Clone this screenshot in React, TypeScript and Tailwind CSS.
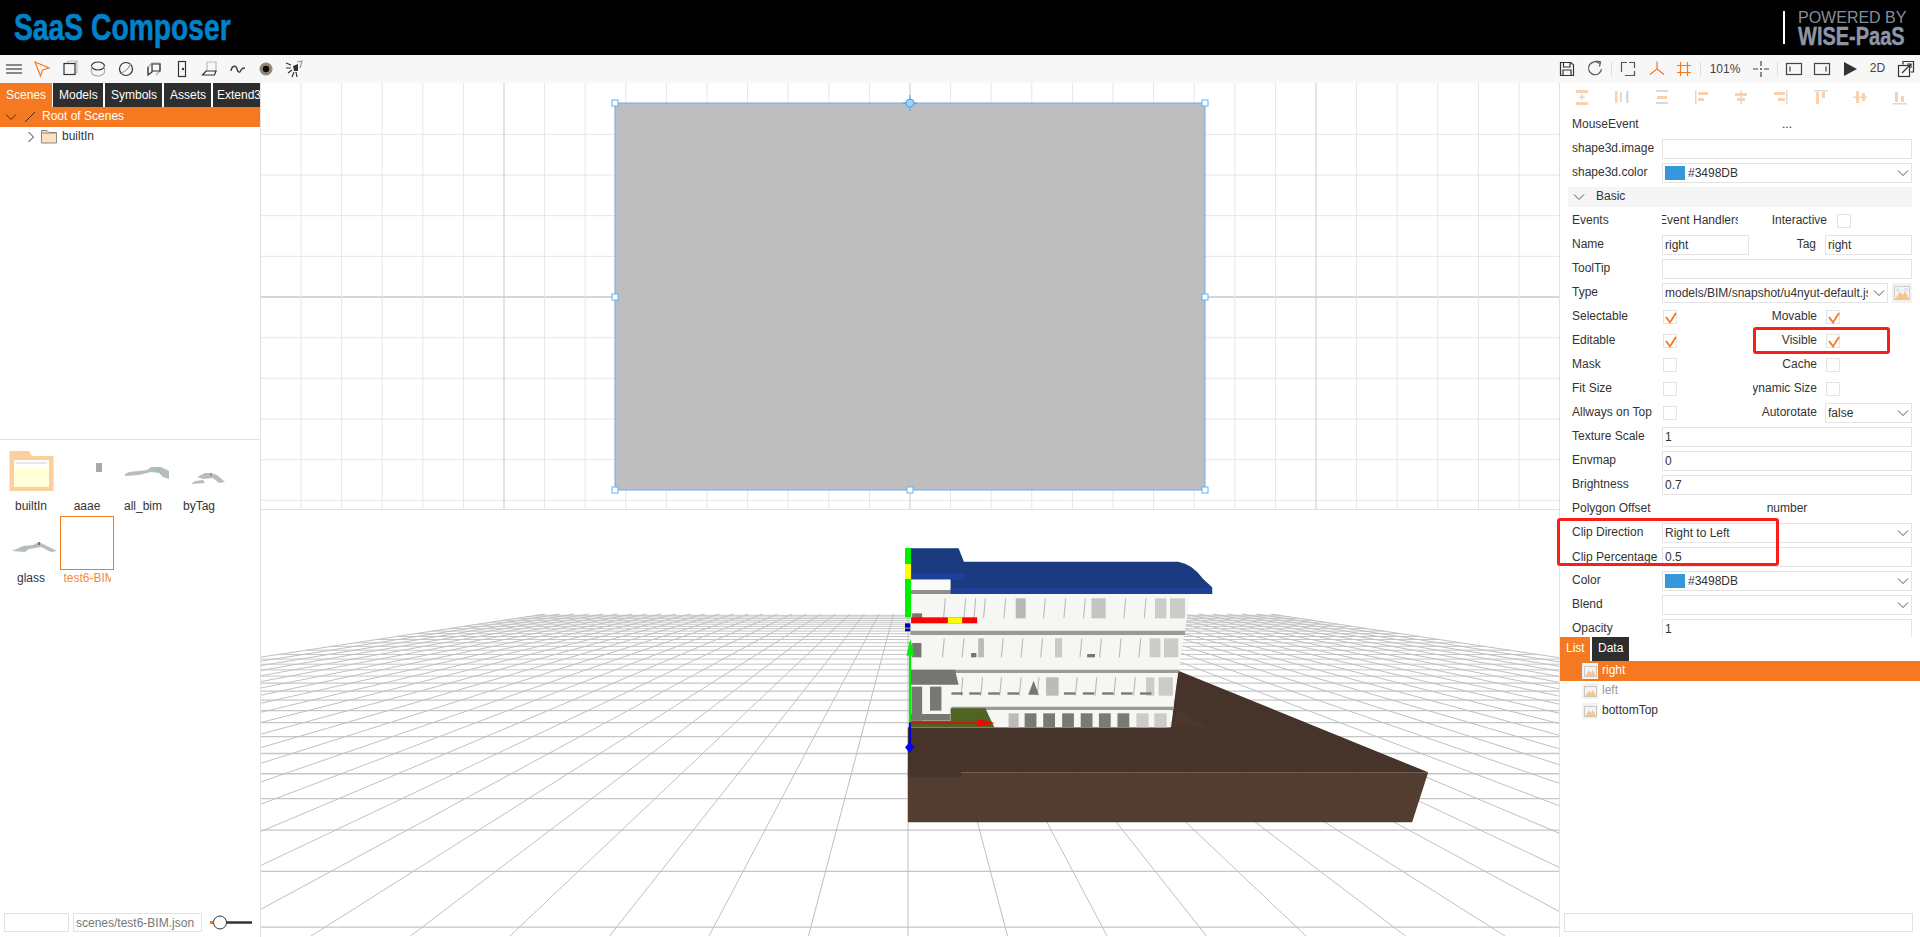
import type { ReactNode } from "react";

const ORANGE = "#f47920";
const LIGHT = "#fbd0ad";
const GREY = "#d9d9d9";

const Chevron = ({ dir = "down", color = "#555" }: { dir?: "down" | "right"; color?: string }) => (
  <svg width="12" height="12" viewBox="0 0 12 12" fill="none" stroke={color} strokeWidth="1">
    {dir === "down" ? <path d="M1 3.5 L6 8.5 L11 3.5" /> : <path d="M3.5 1 L8.5 6 L3.5 11" />}
  </svg>
);

const ImageIcon = () => (
  <svg width="16" height="14" viewBox="0 0 16 14">
    <rect x="0.5" y="0.5" width="15" height="13" fill="#f4f4f4" stroke="#cfcfcf" />
    <path d="M1 13 L6 6 L9 9 L11 5 L15 13 Z" fill="#f6c48e" />
    <rect x="2.5" y="2.5" width="3" height="3" fill="#d5dfe6" />
    <rect x="10" y="2" width="4" height="3" fill="#dfe6ea" />
  </svg>
);

const Tool = ({ w, children }: { w: string; children: ReactNode }) => (
  <div className={`${w} h-7 flex items-center justify-center shrink-0`}>{children}</div>
);

const Ic = ({ children }: { children: ReactNode }) => (
  <svg width="20" height="20" viewBox="0 0 20 20" fill="none" stroke="#333" strokeWidth="1.2">
    {children}
  </svg>
);

const leftIcons: ReactNode[] = [
  <path key="a" d="M2 6h16M2 10h16M2 14h16" stroke="#666" strokeWidth="1.5" />,
  <path key="b" d="M3 3 L17 9 L10.5 11 L8.5 17 Z" stroke={ORANGE} />,
  <g key="c">
    <path d="M7 3.5 L9 2 H17 V13 L15 15" stroke="#bbb" />
    <path d="M15 4 L17 2" stroke="#bbb" />
    <rect x="4" y="4.5" width="11" height="11" />
  </g>,
  <g key="d">
    <ellipse cx="10" cy="7" rx="6.5" ry="4" />
    <path d="M3.5 7 V13 C3.5 15 6.5 17 10 17 C13.5 17 16.5 15 16.5 13 V7" stroke="#aaa" />
  </g>,
  <g key="e">
    <circle cx="10" cy="10" r="6.5" />
    <path d="M5 14 C9 13 13 9 14.5 5" stroke="#999" />
  </g>,
  <g key="f">
    <path d="M4 15 V8 L8 4 H16 V12 L12 16" stroke="#aaa" />
    <path d="M4 8 V16 L8 13 V5 H16 V12 H8" />
  </g>,
  <g key="g">
    <rect x="6.5" y="2.5" width="7" height="15" />
    <circle cx="11" cy="10" r="0.6" fill="#333" />
  </g>,
  <g key="h">
    <path d="M7 12 V3 H16 V13" stroke="#bbb" />
    <path d="M2.5 16 L6 12 H16 L14.5 16 Z" />
  </g>,
  <path key="i" d="M3 12 C4 6 8 6 9 10 C10 14 12 14 13 11 C14 9 15 9 17 9" stroke="#444" strokeWidth="1.5" />,
  <g key="j">
    <circle cx="10" cy="10" r="6.5" fill="#8a8a78" stroke="none" />
    <circle cx="10" cy="10" r="3.2" fill="#1c0606" stroke="none" />
  </g>,
  <g key="k">
    <path d="M13 3 L18 2 L16 9" stroke="#999" />
    <path d="M9 7 L14 5 L14 12 L10 12 Z" fill="#333" stroke="none" />
    <path d="M2 4 L7 6 M2 9 H7 M4 14 L8 11 M8 18 L10 13 M13 18 L12 13" />
  </g>,
];

const Toolbar = () => (
  <div className="h-7 bg-[#f7f7f7] flex items-center justify-between shrink-0">
    <div className="flex">
      {leftIcons.map((icon, i) => (
        <Tool key={i} w="w-7">
          <Ic>{icon}</Ic>
        </Tool>
      ))}
    </div>
    <div className="flex items-center">
      <Tool w="w-7">
        <Ic>
          <path d="M3.5 3.5 H14 L16.5 6 V16.5 H3.5 Z" />
          <path d="M6.5 3.5 V8 H13 V3.5 M6 16.5 V11 H14 V16.5" />
        </Ic>
      </Tool>
      <Tool w="w-7">
        <Ic>
          <path d="M14.5 4.5 A6.5 6.5 0 1 0 16.5 10" stroke="#555" />
          <path d="M11 2 L15.5 3 L14.5 7.5" stroke="#555" />
        </Ic>
      </Tool>
      <Tool w="w-[4px]">
        <div className="w-px h-[14px] bg-[#ddd]" />
      </Tool>
      <Tool w="w-[30px]">
        <Ic>
          <path d="M9 3.5 H3.5 V13 M11 3.5 H16.5 V9 M16.5 12 V16.5 H7 " stroke="#555" />
        </Ic>
      </Tool>
      <Tool w="w-[27px]">
        <Ic>
          <path d="M10 2.5 V10 L3 15.5 M10 10 L17 15.5" stroke={ORANGE} />
        </Ic>
      </Tool>
      <Tool w="w-7">
        <Ic>
          <path d="M6.5 3 V17 M13.5 3 V17 M3 6.5 H17 M3 13.5 H17" stroke={ORANGE} />
        </Ic>
      </Tool>
      <Tool w="w-[4px]">
        <div className="w-px h-[14px] bg-[#ddd]" />
      </Tool>
      <Tool w="w-[46px]">
        <span className="text-[12px] text-[#444]">101%</span>
      </Tool>
      <Tool w="w-[26px]">
        <Ic>
          <path d="M10 2 V7 M10 13 V18 M2 10 H7 M13 10 H18" stroke="#444" />
          <circle cx="10" cy="10" r="1" fill="#444" stroke="none" />
        </Ic>
      </Tool>
      <Tool w="w-[6px]">
        <div className="w-px h-[14px] bg-[#ddd]" />
      </Tool>
      <Tool w="w-7">
        <Ic>
          <rect x="2.5" y="4.5" width="15" height="11" stroke="#444" />
          <path d="M6 7.5 V12.5" stroke="#444" />
        </Ic>
      </Tool>
      <Tool w="w-[27px]">
        <Ic>
          <rect x="2.5" y="4.5" width="15" height="11" stroke="#444" />
          <path d="M14 7.5 V12.5" stroke="#444" />
        </Ic>
      </Tool>
      <Tool w="w-[29px]">
        <Ic>
          <path d="M4 3 L17 10 L4 17 Z" fill="#333" stroke="none" />
        </Ic>
      </Tool>
      <Tool w="w-[27px]">
        <span className="text-[12px] text-[#444] pb-[2px]">2D</span>
      </Tool>
      <Tool w="w-[29px]">
        <Ic>
          <path d="M7 5.5 V2.5 H17.5 V13 H14.5" />
          <rect x="2.5" y="6.5" width="11" height="11" />
          <path d="M6 14 L15 5 M11 5 H15 V9" />
        </Ic>
      </Tool>
    </div>
  </div>
);

const Silhouette = ({ shape }: { shape: string }) => {
  if (shape === "aaae") {
    return (
      <svg width="53" height="54" viewBox="0 0 53 54" className="mx-auto">
        <rect x="35" y="19" width="6" height="9" fill="#a8a8a8" />
        <rect x="36" y="19" width="3" height="2" fill="#c9b26a" />
      </svg>
    );
  }
  if (shape === "all_bim") {
    return (
      <svg width="53" height="54" viewBox="0 0 53 54" className="mx-auto">
        <path d="M8 30 L12 28 L22 27 L30 26 L34 23 L44 23 L52 27 L52 35 L46 33 L42 29 L34 28 L22 31 L8 32 Z" fill="#b6bdbd" />
        <rect x="38" y="24" width="5" height="4" fill="#9fc0bb" />
      </svg>
    );
  }
  if (shape === "byTag") {
    return (
      <svg width="53" height="54" viewBox="0 0 53 54" className="mx-auto">
        <path d="M24 33 L32 29 L38 29 L44 31 L52 38 L46 39 L40 34 L30 35 Z M18 40 L22 37 L30 36 L32 39 Z" fill="#b6bdbd" />
        <rect x="37" y="29" width="2" height="3" fill="#d28a3a" />
      </svg>
    );
  }
  return (
    <svg width="53" height="54" viewBox="0 0 53 54" className="mx-auto">
      <path d="M7 35 L18 30 L28 29 L34 26 L42 30 L52 35 L46 36 L36 31 L24 33 L20 36 Z" fill="#b6bdbd" />
      <rect x="33" y="26" width="2" height="3" fill="#a0702c" />
    </svg>
  );
};

const FolderThumb = () => (
  <svg width="53" height="54" viewBox="0 0 53 54" className="mx-auto">
    <path d="M4.500 7 H24 L27 12 H48.500 V47 H4.500 Z" fill="#fdcf9e" />
    <rect x="9" y="16" width="35" height="27" fill="#ffffd8" />
    <rect x="9" y="16" width="35" height="8" fill="#ffffff" />
    <rect x="11" y="18" width="31" height="2" fill="#e8e8e8" />
  </svg>
);

const LeftPanel = () => (
  <aside className="w-[261px] shrink-0 border-r border-[#e2e2e2] flex flex-col">
    <div className="h-6 flex text-white text-[12px] leading-6 shrink-0 overflow-hidden">
      <div className="w-[52px] bg-[#f47920] pl-[6px] shrink-0">Scenes</div>
      <div className="w-[50px] ml-px bg-[#2e2e2e] pl-[6px] shrink-0">Models</div>
      <div className="w-[57px] ml-[2px] bg-[#2e2e2e] pl-[6px] shrink-0">Symbols</div>
      <div className="w-[47px] ml-[2px] bg-[#2e2e2e] pl-[6px] shrink-0">Assets</div>
      <div className="w-[47px] ml-[2px] bg-[#2e2e2e] pl-[4px] shrink-0 overflow-hidden whitespace-nowrap">Extend3D</div>
    </div>
    <div className="h-5 bg-[#f47920] text-white text-[12px] flex items-center pl-[5px] shrink-0">
      <Chevron color="#4a2a10" />
      <svg width="12" height="12" viewBox="0 0 12 12" className="ml-[7px]">
        <path d="M1 11 L11 1" stroke="#4a2a10" strokeWidth="1" />
      </svg>
      <span className="ml-[6px] pb-[2px]">Root of Scenes</span>
    </div>
    <div className="h-[312px] shrink-0">
      <div className="h-[19px] flex items-center pl-[25px] text-[12px] text-[#333]">
        <Chevron dir="right" color="#333" />
        <svg width="16" height="15" viewBox="0 0 16 15" className="ml-[4px]">
          <path d="M0.500 1.500 H6 L8 3.500 H15.500 V14 H0.500 Z" fill="#fde0c0" stroke="#888" />
          <path d="M0.500 4 H15.500" stroke="#888" />
        </svg>
        <span className="ml-[5px] pb-[2px]">builtIn</span>
      </div>
    </div>
    <div className="flex-1 border-t border-[#e2e2e2] pt-1 pl-[3px]">
      <div className="grid grid-cols-[repeat(4,56px)] text-[12px] text-[#333] text-center">
        {[
          { name: "builtIn", kind: "folder" },
          { name: "aaae", kind: "aaae" },
          { name: "all_bim", kind: "all_bim" },
          { name: "byTag", kind: "byTag" },
          { name: "glass", kind: "glass" },
          { name: "test6-BIM", kind: "selected" },
        ].map((item) => (
          <div key={item.name} className="h-[72px]">
            {item.kind === "selected" ? (
              <div className="w-[54px] h-[54px] mx-auto border border-[#f47920]" />
            ) : item.kind === "folder" ? (
              <FolderThumb />
            ) : (
              <Silhouette shape={item.kind} />
            )}
            <div
              className={`w-[47px] mx-auto overflow-hidden whitespace-nowrap leading-4 ${
                item.kind === "selected" ? "text-[#f58a3c]" : ""
              }`}
            >
              {item.name}
            </div>
          </div>
        ))}
      </div>
    </div>
    <div className="h-[24px] pb-[5px] flex items-stretch pl-1 shrink-0">
      <input readOnly className="w-[65px] border border-[#e2e2e2]" />
      <input
        readOnly
        value="scenes/test6-BIM.json"
        className="w-[129px] ml-[4px] border border-[#e2e2e2] text-[12px] text-[#777] pl-[2px]"
      />
      <svg width="44" height="19" viewBox="0 0 44 19" className="ml-[8px]">
        <rect x="0" y="8" width="3" height="3" fill={ORANGE} />
        <path d="M10 9.500 H42" stroke="#333" strokeWidth="2.500" />
        <circle cx="10" cy="9.500" r="6.500" fill="#fff" stroke="#333" strokeWidth="1" />
      </svg>
    </div>
  </aside>
);

const horizontals = Array.from({ length: 10 }, (_, i) => i - 4);
const verticals = Array.from({ length: 33 }, (_, i) => i - 16);

const handles: [number, number][] = [
  [615, 103],
  [1205, 103],
  [615, 297],
  [1205, 297],
  [615, 490],
  [910, 490],
  [1205, 490],
];

const Canvas2D = () => (
  <svg width="1298" height="427" viewBox="261 83 1298 427" className="block bg-white shrink-0">
    {horizontals.map((k) => (
      <line
        key={k}
        x1="261"
        x2="1559"
        y1={297 + k * 40.66}
        y2={297 + k * 40.66}
        stroke={k === 0 ? "#d6d6d6" : "#e6e6e6"}
        strokeWidth={k === 0 ? 2 : 1}
      />
    ))}
    {verticals.map((k) => (
      <line
        key={k}
        x1={910 + k * 40.6}
        x2={910 + k * 40.6}
        y1="83"
        y2="510"
        stroke={k % 10 === 0 ? "#c9c9c9" : "#e6e6e6"}
      />
    ))}
    <rect x="615" y="103" width="590" height="387" fill="#bebebe" stroke="#66aef5" />
    <line x1="910" x2="910" y1="95" y2="111" stroke="#4a9ff0" />
    <line x1="903" x2="917" y1="103" y2="103" stroke="#4a9ff0" />
    <circle cx="910" cy="103" r="4" fill="#a5cff7" stroke="#4a9ff0" />
    {handles.map(([x, y]) => (
      <rect key={`${x}-${y}`} x={x - 3} y={y - 3} width="6" height="6" fill="#fff" stroke="#66aef5" />
    ))}
  </svg>
);

const VPX = 908;
const VPY = 560;
const depthRows = Array.from({ length: 33 }, (_, i) => i - 1);
const depthCols = Array.from({ length: 51 }, (_, i) => i - 25);
const floorX = (k: number, y: number) => VPX + (k * 99.5 * (y - VPY)) / 377;
const floorY = (n: number) => VPY + 1 / (0.002717 + n * 0.000485);

const winLines = (xs: number[], top: number, bottom: number) =>
  xs.map((x) => <line key={`${x}-${top}`} x1={x} x2={x - 5} y1={top} y2={bottom} stroke="#b9b9b6" strokeWidth="3" />);

const Fill = ({ x, y, w, h, c }: { x: number; y: number; w: number; h: number; c: string }) => (
  <rect x={x} y={y} width={w} height={h} fill={c} />
);

const Building = () => (
  <g transform="translate(880 530) scale(0.35714 0.33333)">
    <path d="M85 595 H815 L835 425 L1535 730 H78 V595 Z" fill="#46332a" />
    <path d="M815 595 H920 L835 540 Z" fill="#4b372c" />
    <path d="M78 730 H1535 L1490 880 H78 Z" fill="#533d31" />
    <path d="M78 720 H225 L230 743 H78 Z" fill="#47342a" />

    <path d="M85 195 H870 L810 595 H85 Z" fill="#f6f6f4" />

    <path
      d="M85 58 H220 L235 98 H835 Q875 105 905 150 L930 175 V195 H197 V150 H85 Z"
      fill="#1b3a80"
    />
    <path d="M197 178 H930 V195 H197 Z" fill="#1f4098" />
    <rect x="85" y="135" width="153" height="17" fill="#1f4098" />
    <rect x="85" y="183" width="112" height="12" fill="#8f8f88" />
    <rect x="85" y="152" width="112" height="31" fill="#fafafa" />

    <path d="M85 305 H855 L853 318 H85 Z" fill="#9a9a94" />
    <path d="M85 422 H838 L836 432 H85 Z" fill="#9a9a94" />
    <path d="M200 533 H822 L820 543 H200 Z" fill="#9a9a94" />

    {winLines([183, 240, 268, 295, 352, 463, 520, 575, 688, 745], 208, 268)}
    <Fill x={380} y={208} w={28} h={60} c="#b8b8b4" />
    <Fill x={592} y={208} w={40} h={60} c="#c4c4c0" />
    <Fill x={770} y={208} w={32} h={60} c="#cbcbc8" />
    <Fill x={812} y={208} w={42} h={60} c="#cbcbc8" />
    <Fill x={90} y={253} w={28} h={15} c="#777872" />

    {winLines([180, 235, 345, 400, 455, 565, 620, 675, 730], 328, 385)}
    <Fill x={90} y={342} w={26} h={43} c="#777872" />
    <Fill x={275} y={328} w={16} h={57} c="#bbbbb7" />
    <Fill x={255} y={372} w={15} h={13} c="#777872" />
    <Fill x={490} y={328} w={20} h={57} c="#c9c9c6" />
    <Fill x={580} y={375} w={22} h={10} c="#777872" />
    <Fill x={755} y={328} w={30} h={57} c="#cbcbc8" />
    <Fill x={795} y={328} w={40} h={57} c="#cbcbc8" />

    {winLines([232, 287, 340, 395, 445, 552, 607, 660, 715], 445, 500)}
    <Fill x={465} y={445} w={35} h={55} c="#bbbbb7" />
    <Fill x={745} y={445} w={23} h={55} c="#cbcbc8" />
    <Fill x={780} y={445} w={40} h={55} c="#cbcbc8" />
    {[200, 250, 303, 357, 515, 568, 622, 675, 728].map((x) => (
      <Fill key={x} x={x} y={490} w={32} h={7} c="#777872" />
    ))}
    <path d="M430 455 L445 497 H415 Z" fill="#777872" />

    {[405, 457, 510, 562, 613, 665].map((x) => (
      <Fill key={x} x={x} y={553} w={33} h={42} c="#777b74" />
    ))}
    <Fill x={360} y={553} w={28} h={42} c="#bbbbb7" />
    <Fill x={718} y={553} w={34} h={42} c="#cbcbc8" />
    <Fill x={768} y={553} w={35} h={42} c="#cbcbc8" />

    <path d="M197 538 H295 L320 595 H85 V575 H197 Z" fill="#4f6423" />
    <path d="M85 467 H197 V575 H85 Z" fill="#f6f6f4" />
    <path d="M85 422 H210 L220 467 H85 Z" fill="#75766f" />
    <rect x="88" y="473" width="30" height="102" fill="#777872" />
    <rect x="85" y="555" width="112" height="20" fill="#777872" />
    <rect x="140" y="473" width="32" height="72" fill="#777872" />

    <rect x="70" y="57" width="17" height="208" fill="#00f000" />
    <rect x="70" y="105" width="17" height="45" fill="#ffff00" />
    <rect x="87" y="265" width="185" height="18" fill="#ff0000" />
    <rect x="190" y="265" width="40" height="18" fill="#ffff00" />
    <rect x="70" y="283" width="15" height="24" fill="#0000b0" />
    <rect x="70" y="296" width="15" height="3" fill="#c9c03a" />

    <rect x="81" y="340" width="6" height="240" fill="#00f000" />
    <path d="M85 330 L96 380 H74 Z" fill="#00f000" />
    <rect x="81" y="580" width="6" height="75" fill="#0000e0" />
    <path d="M83 640 L96 655 L83 672 L70 655 Z" fill="#0000ff" />
    <rect x="85" y="580" width="200" height="5" fill="#ff0000" />
    <path d="M274 571 L322 582 L274 593 Z" fill="#ff0000" />
  </g>
);

const Canvas3D = () => (
  <svg width="1298" height="426" viewBox="261 511 1298 426" className="block bg-white border-t-0">
    {depthRows.map((n) => {
      const y = floorY(n);
      return (
        <line
          key={n}
          x1={Math.max(261, floorX(-25, y))}
          x2={Math.min(1559, floorX(25, y))}
          y1={y}
          y2={y}
          stroke="#c6c6c6"
          strokeWidth={n < 12 ? 1.3 : 1}
        />
      );
    })}
    {depthCols.map((k) => (
      <line key={k} x1={floorX(k, 615)} y1="615" x2={floorX(k, 937)} y2="937" stroke="#c0c0c0" />
    ))}
    <Building />
  </svg>
);

const alignIcons: [number, number, number, number, string][][] = [
  [[2, 1, 12, 3, LIGHT], [2, 13, 12, 3, LIGHT], [5, 7.5, 6, 1.5, GREY], [7.2, 5.500, 1.5, 6, GREY]],
  [[1, 2, 2.5, 12, LIGHT], [6, 3, 2, 10, GREY], [12, 2, 2.5, 12, GREY]],
  [[2, 1, 12, 2, GREY], [3, 7, 10, 3, LIGHT], [2, 13, 12, 2, GREY]],
  [[2, 1, 1.5, 14, GREY], [5, 3, 10, 3, LIGHT], [5, 9, 6, 3, LIGHT]],
  [[7.5, 1, 1.5, 14, GREY], [2, 4, 12, 3, LIGHT], [4, 9, 8, 3, LIGHT]],
  [[13, 1, 1.5, 14, GREY], [1, 3, 11, 3, LIGHT], [5, 9, 7, 3, LIGHT]],
  [[1, 1, 14, 1.5, GREY], [3, 3, 3, 12, LIGHT], [9, 3, 3, 6, LIGHT]],
  [[1, 7.5, 14, 1.5, GREY], [4, 2, 3, 12, LIGHT], [10, 4, 3, 8, LIGHT]],
  [[1, 14, 14, 1.5, GREY], [3, 3, 3, 10, LIGHT], [9, 7, 3, 6, LIGHT]],
];

const Check = ({ on }: { on?: boolean }) => (
  <div className="w-[14px] h-[14px] border border-[#e4e4e4] bg-white relative shrink-0">
    {on && (
      <svg width="14" height="14" viewBox="0 0 14 14" fill="none" className="absolute left-0 top-0">
        <path d="M2 6 L6 11.500 L12 2" stroke={ORANGE} strokeWidth="1.800" />
      </svg>
    )}
  </div>
);

const Box = ({ className = "", children }: { className?: string; children?: ReactNode }) => (
  <div className={`h-5 border border-[#e4e4e4] bg-white flex items-center pl-[2px] text-[12px] text-[#333] overflow-hidden ${className}`}>
    {children}
  </div>
);

const Row = ({
  label,
  children,
  className = "h-6",
  labelClass = "pb-[3px]",
}: {
  label: string;
  children?: ReactNode;
  className?: string;
  labelClass?: string;
}) => (
  <div className={`${className} flex items-center`}>
    <div className={`w-[90px] shrink-0 whitespace-nowrap ${labelClass}`}>{label}</div>
    {children}
  </div>
);

const Select = ({ children }: { children?: ReactNode }) => (
  <Box className="w-[250px] justify-between pr-[2px]">
    <div className="flex items-center">{children}</div>
    <Chevron />
  </Box>
);

const Swatch = () => (
  <>
    <div className="w-5 h-[14px] bg-[#3498DB] mr-[3px]" />
    <span className="pb-[1px]">#3498DB</span>
  </>
);

const CheckRow = ({
  left,
  right,
  leftOn,
  rightOn,
}: {
  left: string;
  right: string;
  leftOn?: boolean;
  rightOn?: boolean;
}) => (
  <div className="h-6 flex items-center">
    <div className="w-[91px] shrink-0 pb-[3px] whitespace-nowrap">{left}</div>
    <Check on={leftOn} />
    <div className="w-[64px] ml-[76px] shrink-0 pb-[3px] text-right whitespace-nowrap overflow-hidden [direction:rtl]">
      {right}
    </div>
    <div className="ml-[9px]">
      <Check on={rightOn} />
    </div>
  </div>
);

const PropertyPanel = () => (
  <div className="h-[554px] overflow-hidden pl-[12px] pr-[7px] text-[12px] text-[#333] shrink-0">
    <div className="h-7 flex items-center justify-between pl-[2px] pr-[5px]">
      {alignIcons.map((rects, i) => (
        <svg key={i} width="16" height="16" viewBox="0 0 16 16">
          {rects.map(([x, y, w, h, c], j) => (
            <rect key={j} x={x} y={y} width={w} height={h} fill={c} />
          ))}
        </svg>
      ))}
    </div>
    <Row label="MouseEvent" className="h-[26px]" labelClass="pb-[1px]">
      <div className="w-[250px] text-center">...</div>
    </Row>
    <Row label="shape3d.image">
      <Box className="w-[250px]" />
    </Row>
    <Row label="shape3d.color">
      <Select>
        <Swatch />
      </Select>
    </Row>
    <div className="h-6 flex items-center -ml-[4px]">
      <div className="h-5 w-[344px] bg-[#f5f5f5] flex items-center pl-[5px]">
        <Chevron />
        <span className="ml-[11px] pb-[2px]">Basic</span>
      </div>
    </div>
    <div className="h-6 flex items-center">
      <div className="w-[90px] pb-[3px]">Events</div>
      <div className="w-[76px] overflow-hidden whitespace-nowrap flex justify-center pb-[3px]">
        <span className="shrink-0">Event Handlers</span>
      </div>
      <div className="w-[89px] text-right pb-[3px]">Interactive</div>
      <div className="ml-[10px]">
        <Check />
      </div>
    </div>
    <Row label="Name">
      <Box className="w-[87px]">right</Box>
      <div className="w-[67px] text-right pb-[3px]">Tag</div>
      <Box className="w-[87px] ml-[9px]">right</Box>
    </Row>
    <Row label="ToolTip">
      <Box className="w-[250px]" />
    </Row>
    <Row label="Type">
      <Box className="w-[226px] justify-between pr-[2px]">
        <span className="w-[203px] overflow-hidden whitespace-nowrap">models/BIM/snapshot/u4nyut-default.json</span>
        <Chevron />
      </Box>
      <div className="w-5 h-5 ml-[4px] bg-[#f2f2f2] flex items-center justify-center">
        <ImageIcon />
      </div>
    </Row>
    <CheckRow left="Selectable" right="Movable" leftOn rightOn />
    <CheckRow left="Editable" right="Visible" leftOn rightOn />
    <CheckRow left="Mask" right="Cache" />
    <CheckRow left="Fit Size" right="Dynamic Size" />
    <div className="h-6 flex items-center">
      <div className="w-[91px] shrink-0 pb-[3px] whitespace-nowrap">Allways on Top</div>
      <Check />
      <div className="w-[64px] ml-[76px] shrink-0 pb-[3px] text-right">Autorotate</div>
      <Box className="w-[87px] ml-[8px] justify-between pr-[2px]">
        false
        <Chevron />
      </Box>
    </div>
    <Row label="Texture Scale">
      <Box className="w-[250px]">1</Box>
    </Row>
    <Row label="Envmap">
      <Box className="w-[250px]">0</Box>
    </Row>
    <Row label="Brightness">
      <Box className="w-[250px]">0.7</Box>
    </Row>
    <Row label="Polygon Offset">
      <div className="w-[250px] text-center pb-[3px]">number</div>
    </Row>
    <Row label="Clip Direction">
      <Select>Right to Left</Select>
    </Row>
    <Row label="Clip Percentage" labelClass="pb-0">
      <Box className="w-[250px]">0.5</Box>
    </Row>
    <Row label="Color">
      <Select>
        <Swatch />
      </Select>
    </Row>
    <Row label="Blend">
      <Select />
    </Row>
    <Row label="Opacity">
      <Box className="w-[250px]">1</Box>
    </Row>
  </div>
);

const ListRow = ({ name, active, muted }: { name: string; active?: boolean; muted?: boolean }) => (
  <div className={`h-5 flex items-center pl-[22px] text-[12px] ${active ? "bg-[#f47920] text-white" : "text-[#333]"}`}>
    <div className="w-4 h-4 bg-[#f2f2f2] flex items-center justify-center">
      <svg width="13" height="11" viewBox="0 0 16 14">
        <rect x="0.5" y="0.5" width="15" height="13" fill="#f4f4f4" stroke="#bbb" />
        <path d="M1 13 L6 6 L9 9 L11 5 L15 13 Z" fill="#f6c48e" />
      </svg>
    </div>
    <span className={`ml-[4px] pb-[2px] ${muted ? "text-[#999]" : ""}`}>{name}</span>
  </div>
);

const RightPanel = () => (
  <aside className="w-[361px] shrink-0 border-l border-[#e2e2e2] flex flex-col relative">
    <PropertyPanel />
    <div className="h-6 flex text-white text-[12px] leading-[22px] shrink-0">
      <div className="w-[30px] bg-[#f47920] pl-[6px]">List</div>
      <div className="w-[37px] ml-[2px] bg-[#2e2e2e] pl-[6px]">Data</div>
    </div>
    <ListRow name="right" active />
    <ListRow name="left" muted />
    <ListRow name="bottomTop" />
    <div className="flex-1" />
    <div className="h-6 pb-[5px] pl-1 pr-[7px] shrink-0">
      <div className="h-[19px] border border-[#e2e2e2]" />
    </div>
    <div className="absolute left-[193px] top-[244px] w-[137px] h-[27px] border-[3px] border-[#fb1d17] rounded-[3px]" />
    <div className="absolute left-[-3px] top-[435px] w-[222px] h-[48px] border-[3px] border-[#fb1d17] rounded-[3px]" />
  </aside>
);

const App = () => (
  <div className="w-[1920px] h-[937px] overflow-hidden bg-white flex flex-col font-['Liberation_Sans',Arial,sans-serif]">
    <header className="h-[55px] bg-black flex items-center justify-between shrink-0 overflow-hidden">
      <div className="ml-[14px] text-[36px] leading-none font-bold text-[#0082ca] whitespace-nowrap origin-left scale-x-[.785] [-webkit-text-stroke:0.6px_#0082ca]">
        SaaS Composer
      </div>
      <div className="flex items-center mr-[14px]">
        <div className="w-[2px] h-[33px] bg-white mr-[13px]" />
        <div className="w-[108px]">
          <div className="text-[16px] leading-[16px] text-[#858d9c] whitespace-nowrap">POWERED BY</div>
          <div className="text-[25px] leading-[20px] font-bold text-[#8d96a8] whitespace-nowrap origin-left scale-x-[.8] [-webkit-text-stroke:0.4px_#8d96a8]">
            WISE-PaaS
          </div>
        </div>
      </div>
    </header>
    <Toolbar />
    <div className="flex-1 flex min-h-0">
      <LeftPanel />
      <main className="w-[1298px] shrink-0 flex flex-col">
        <Canvas2D />
        <div className="h-px bg-[#dfdfdf] -mt-px relative" />
        <Canvas3D />
      </main>
      <RightPanel />
    </div>
  </div>
);

export default App;
